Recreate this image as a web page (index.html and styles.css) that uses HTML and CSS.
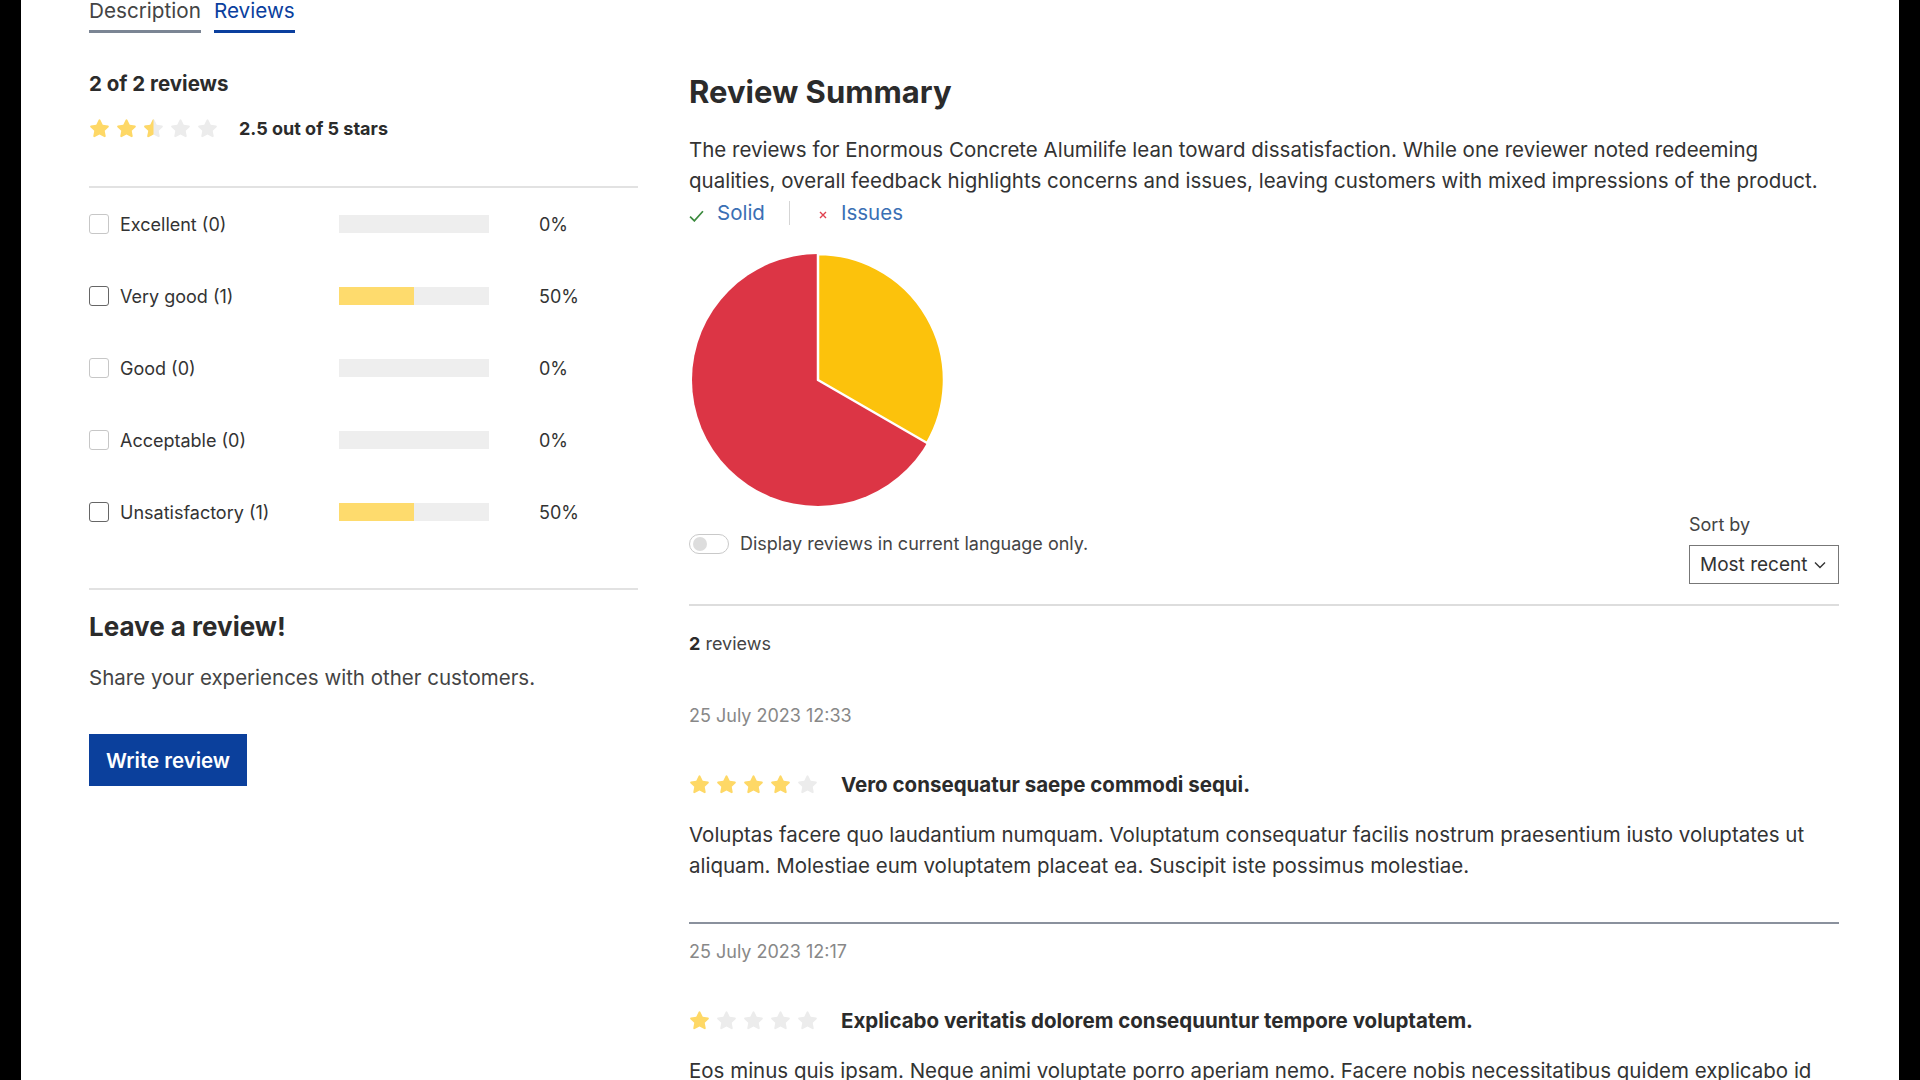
FILE: index.html
```html
<!DOCTYPE html>
<html lang="en">

<head>
    <meta charset="UTF-8">
    <meta name="viewport" content="width=device-width, initial-scale=1.0">
    <title>Reviews</title>
    <link rel="stylesheet" href="styles.css">
</head>

<body>
    <svg width="0" height="0" class="defs">
        <defs>
            <path id="star" d="M10 1.2c.4 0 .7.2.9.6l2.2 4.6 5 .7c.8.1 1.1 1.1.5 1.6l-3.6 3.5.9 5c.1.8-.7 1.4-1.4 1l-4.5-2.4-4.5 2.4c-.7.4-1.5-.2-1.4-1l.9-5L1.4 8.7c-.6-.5-.3-1.5.5-1.6l5-.7 2.2-4.6c.2-.4.5-.6.9-.6z" />
            <clipPath id="half">
                <rect x="0" y="0" width="10" height="20" />
            </clipPath>
        </defs>
    </svg>

    <div class="page">
        <nav class="tabs">
            <span class="tab">Description</span>
            <span class="tab active">Reviews</span>
        </nav>

        <div class="reviews-layout">
            <aside class="left-col">
                <h3 class="count-title">2 of 2 reviews</h3>
                <div class="avg-rating">
                    <div class="stars">
                        <svg class="star" viewBox="0 0 20 20"><use href="#star" class="on" /></svg>
                        <svg class="star" viewBox="0 0 20 20"><use href="#star" class="on" /></svg>
                        <svg class="star" viewBox="0 0 20 20"><use href="#star" class="off" /><use href="#star" class="on" clip-path="url(#half)" /></svg>
                        <svg class="star" viewBox="0 0 20 20"><use href="#star" class="off" /></svg>
                        <svg class="star" viewBox="0 0 20 20"><use href="#star" class="off" /></svg>
                    </div>
                    <span class="avg-text">2.5 out of 5 stars</span>
                </div>

                <ul class="filter-list">
                    <li class="filter-row disabled">
                        <span class="check"></span>
                        <span class="filter-label">Excellent (0)</span>
                        <span class="bar"><span class="bar-fill" style="width: 0%"></span></span>
                        <span class="pct">0%</span>
                    </li>
                    <li class="filter-row">
                        <span class="check"></span>
                        <span class="filter-label">Very good (1)</span>
                        <span class="bar"><span class="bar-fill" style="width: 50%"></span></span>
                        <span class="pct">50%</span>
                    </li>
                    <li class="filter-row disabled">
                        <span class="check"></span>
                        <span class="filter-label">Good (0)</span>
                        <span class="bar"><span class="bar-fill" style="width: 0%"></span></span>
                        <span class="pct">0%</span>
                    </li>
                    <li class="filter-row disabled">
                        <span class="check"></span>
                        <span class="filter-label">Acceptable (0)</span>
                        <span class="bar"><span class="bar-fill" style="width: 0%"></span></span>
                        <span class="pct">0%</span>
                    </li>
                    <li class="filter-row">
                        <span class="check"></span>
                        <span class="filter-label">Unsatisfactory (1)</span>
                        <span class="bar"><span class="bar-fill" style="width: 50%"></span></span>
                        <span class="pct">50%</span>
                    </li>
                </ul>

                <div class="leave-review">
                    <h2>Leave a review!</h2>
                    <p>Share your experiences with other customers.</p>
                    <button class="btn">Write review</button>
                </div>
            </aside>

            <main class="right-col">
                <h2 class="summary-title">Review Summary</h2>
                <p class="summary-text">The reviews for Enormous Concrete Alumilife lean toward dissatisfaction. While one reviewer noted redeeming qualities, overall feedback highlights concerns and issues, leaving customers with mixed impressions of the product.</p>
                <div class="summary-links">
                    <span class="sum-link">
                        <svg class="ico-check" viewBox="0 0 14 12"><path d="M1 7l4 4 8-9" fill="none" stroke="#3b8a3e" stroke-width="1.6" /></svg>
                        Solid
                    </span>
                    <span class="divider"></span>
                    <span class="sum-link">
                        <svg class="ico-x" viewBox="0 0 10 10"><path d="M2 2l6 6M8 2l-6 6" fill="none" stroke="#e0424f" stroke-width="1.4" /></svg>
                        Issues
                    </span>
                </div>

                <svg class="pie" viewBox="0 0 254 254" width="254" height="254">
                    <circle cx="127" cy="127" r="126" fill="#dc3545" />
                    <path d="M127 127 L127 1 A126 126 0 0 1 236.1 190 Z" fill="#fcc20c" stroke="#fff" stroke-width="2.5" stroke-linejoin="round" />
                </svg>

                <div class="list-tools">
                    <label class="lang-toggle">
                        <span class="switch"><span class="knob"></span></span>
                        Display reviews in current language only.
                    </label>
                    <div class="sort">
                        <span class="sort-label">Sort by</span>
                        <div class="select">
                            <span>Most recent</span>
                            <svg class="chev" viewBox="0 0 12 8"><path d="M1 1.5l5 5 5-5" fill="none" stroke="#333" stroke-width="1.4" /></svg>
                        </div>
                    </div>
                </div>

                <div class="review-count"><b>2</b> reviews</div>

                <article class="review">
                    <div class="review-date">25 July 2023 12:33</div>
                    <div class="review-head">
                        <div class="stars">
                            <svg class="star" viewBox="0 0 20 20"><use href="#star" class="on" /></svg>
                            <svg class="star" viewBox="0 0 20 20"><use href="#star" class="on" /></svg>
                            <svg class="star" viewBox="0 0 20 20"><use href="#star" class="on" /></svg>
                            <svg class="star" viewBox="0 0 20 20"><use href="#star" class="on" /></svg>
                            <svg class="star" viewBox="0 0 20 20"><use href="#star" class="off" /></svg>
                        </div>
                        <h4>Vero consequatur saepe commodi sequi.</h4>
                    </div>
                    <p>Voluptas facere quo laudantium numquam. Voluptatum consequatur facilis nostrum praesentium iusto voluptates ut aliquam. Molestiae eum voluptatem placeat ea. Suscipit iste possimus molestiae.</p>
                </article>

                <article class="review">
                    <div class="review-date">25 July 2023 12:17</div>
                    <div class="review-head">
                        <div class="stars">
                            <svg class="star" viewBox="0 0 20 20"><use href="#star" class="on" /></svg>
                            <svg class="star" viewBox="0 0 20 20"><use href="#star" class="off" /></svg>
                            <svg class="star" viewBox="0 0 20 20"><use href="#star" class="off" /></svg>
                            <svg class="star" viewBox="0 0 20 20"><use href="#star" class="off" /></svg>
                            <svg class="star" viewBox="0 0 20 20"><use href="#star" class="off" /></svg>
                        </div>
                        <h4>Explicabo veritatis dolorem consequuntur tempore voluptatem.</h4>
                    </div>
                    <p>Eos minus quis ipsam. Neque animi voluptate porro aperiam nemo. Facere nobis necessitatibus quidem explicabo id dolores. Quibusdam quasi ipsum occaecati.</p>
                </article>
            </main>
        </div>
    </div>
</body>

</html>
```

FILE: styles.css
```css
body {
    margin: 0;
    background-color: #000;
    font-family: 'Inter', 'Noto Sans', sans-serif;
    color: #333;
    overflow: hidden;
}

.defs {
    position: absolute;
}

.page {
    margin: 0 21px;
    background-color: #fff;
    min-height: 100vh;
    padding: 0 60px 0 68px;
}

/* tabs (page is scrolled a little, so they are cut at the top) */
.tabs {
    display: flex;
    gap: 13px;
    margin-top: -9px;
}

.tab {
    font-size: 20.7px;
    line-height: 39px;
    color: #444;
    border-bottom: 3px solid #7b8594;
}

.tab.active {
    color: #0b3f9e;
    border-bottom-color: #0b3f9e;
}

.reviews-layout {
    display: flex;
    gap: 51px;
    align-items: flex-start;
}

.left-col {
    width: 549px;
    flex-shrink: 0;
}

.right-col {
    flex: 1;
}

/* stars */
.stars {
    display: flex;
    gap: 6px;
}

.star {
    width: 21px;
    height: 21px;
    display: block;
}

.on {
    fill: #fed866;
}

.off {
    fill: #ececec;
}

/* left column */
.count-title {
    margin: 38px 0 0;
    font-size: 20.5px;
    line-height: 25px;
    color: #2b2b2b;
}

.avg-rating {
    display: flex;
    align-items: center;
    gap: 21px;
    margin-top: 22px;
    padding-bottom: 47px;
    border-bottom: 2px solid #e2e2e2;
}

.avg-text {
    font-weight: bold;
    font-size: 18px;
    color: #2b2b2b;
}

.filter-list {
    list-style: none;
    margin: 0;
    padding: 0 0 40px;
    border-bottom: 2px solid #e2e2e2;
}

.filter-row {
    display: flex;
    align-items: center;
    height: 72px;
    font-size: 18px;
    color: #333;
}

.check {
    width: 18px;
    height: 18px;
    border: 1px solid #666;
    border-radius: 3px;
    margin-right: 11px;
}

.disabled .check {
    border-color: #c7c7c7;
}

.filter-label {
    width: 219px;
}

.bar {
    width: 150px;
    height: 18px;
    background-color: #eee;
    display: flex;
}

.bar-fill {
    background-color: #fedb6d;
}

.pct {
    margin-left: 50px;
}

.leave-review h2 {
    margin: 21px 0 0;
    font-size: 26px;
    line-height: 32px;
    color: #2b2b2b;
}

.leave-review p {
    margin: 22px 0 0;
    font-size: 20.5px;
    line-height: 25px;
    color: #444;
}

.btn {
    display: block;
    margin-top: 44px;
    width: 158px;
    height: 52px;
    border: none;
    background-color: #0b409c;
    color: #fff;
    font-family: inherit;
    font-size: 20.5px;
    font-weight: 600;
}

/* right column */
.summary-title {
    margin: 41px 0 0;
    font-size: 31px;
    line-height: 36px;
    color: #2b2b2b;
}

.summary-text {
    margin: 24px 0 0;
    font-size: 20.5px;
    line-height: 31px;
    color: #333;
}

.summary-links {
    display: flex;
    align-items: center;
    height: 31px;
    margin-top: 1px;
    font-size: 20.5px;
    color: #3a6fb4;
}

.sum-link {
    display: flex;
    align-items: center;
    gap: 13px;
}

.ico-check {
    width: 15px;
    height: 13px;
    margin-top: 6px;
}

.ico-x {
    width: 10px;
    height: 10px;
    margin-top: 4px;
}

.divider {
    width: 1px;
    height: 24px;
    background-color: #d5d5d5;
    margin: 0 28px 0 24px;
}

.pie {
    display: block;
    margin: 25px 0 0 2px;
}

.list-tools {
    display: flex;
    justify-content: space-between;
    align-items: flex-end;
    margin-top: 7px;
    padding-bottom: 20px;
    border-bottom: 2px solid #ddd;
}

.lang-toggle {
    display: flex;
    align-items: center;
    gap: 11px;
    font-size: 18px;
    line-height: 22px;
    color: #444;
    margin-bottom: 29px;
}

.switch {
    width: 32px;
    height: 18px;
    border: 1px solid #c9c9c9;
    border-radius: 10px;
    display: flex;
    align-items: center;
    padding: 0 3px;
}

.knob {
    width: 14px;
    height: 14px;
    border-radius: 50%;
    background-color: #ddd;
}

.sort {
    display: flex;
    flex-direction: column;
    gap: 9px;
}

.sort-label {
    font-size: 18px;
    line-height: 22px;
    color: #444;
}

.select {
    width: 150px;
    height: 39px;
    box-sizing: border-box;
    border: 1px solid #777;
    display: flex;
    align-items: center;
    padding: 0 8px 0 10px;
    font-size: 19px;
    color: #333;
    gap: 7px;
    white-space: nowrap;
}

.chev {
    width: 12px;
    height: 8px;
    flex-shrink: 0;
}

.review-count {
    margin-top: 27px;
    font-size: 18px;
    line-height: 22px;
    color: #444;
}

.review-count b {
    color: #2b2b2b;
}

.review {
    padding-bottom: 41px;
}

.review + .review {
    border-top: 2px solid #8a919d;
}

.review-date {
    margin-top: 50px;
    font-size: 18px;
    line-height: 22px;
    color: #888;
}

.review + .review .review-date {
    margin-top: 17px;
}

.review-head {
    display: flex;
    align-items: center;
    gap: 23px;
    margin-top: 45px;
}

.review-head h4 {
    margin: 0;
    font-size: 20.5px;
    line-height: 25px;
    color: #2b2b2b;
}

.review p {
    margin: 22px 0 0;
    font-size: 20.5px;
    line-height: 31px;
    color: #333;
}
```
